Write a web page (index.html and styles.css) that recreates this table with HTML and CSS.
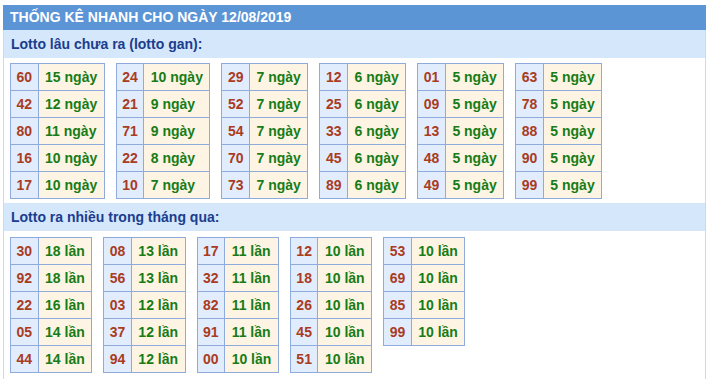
FILE: index.html
```html
<!DOCTYPE html>
<html>
<head>
<meta charset="utf-8">
<link rel="stylesheet" href="styles.css">
</head>
<body>
<div class="box">
  <div class="title">THỐNG KÊ NHANH CHO NGÀY 12/08/2019</div>
  <div class="sub">Lotto lâu chưa ra (lotto gan):</div>
  <div class="group first">
    <table><tr><td class="n">60</td><td class="v">15 ngày</td></tr><tr><td class="n">42</td><td class="v">12 ngày</td></tr><tr><td class="n">80</td><td class="v">11 ngày</td></tr><tr><td class="n">16</td><td class="v">10 ngày</td></tr><tr><td class="n">17</td><td class="v">10 ngày</td></tr></table>
    <table><tr><td class="n">24</td><td class="v">10 ngày</td></tr><tr><td class="n">21</td><td class="v">9 ngày</td></tr><tr><td class="n">71</td><td class="v">9 ngày</td></tr><tr><td class="n">22</td><td class="v">8 ngày</td></tr><tr><td class="n">10</td><td class="v">7 ngày</td></tr></table>
    <table><tr><td class="n">29</td><td class="v">7 ngày</td></tr><tr><td class="n">52</td><td class="v">7 ngày</td></tr><tr><td class="n">54</td><td class="v">7 ngày</td></tr><tr><td class="n">70</td><td class="v">7 ngày</td></tr><tr><td class="n">73</td><td class="v">7 ngày</td></tr></table>
    <table><tr><td class="n">12</td><td class="v">6 ngày</td></tr><tr><td class="n">25</td><td class="v">6 ngày</td></tr><tr><td class="n">33</td><td class="v">6 ngày</td></tr><tr><td class="n">45</td><td class="v">6 ngày</td></tr><tr><td class="n">89</td><td class="v">6 ngày</td></tr></table>
    <table><tr><td class="n">01</td><td class="v">5 ngày</td></tr><tr><td class="n">09</td><td class="v">5 ngày</td></tr><tr><td class="n">13</td><td class="v">5 ngày</td></tr><tr><td class="n">48</td><td class="v">5 ngày</td></tr><tr><td class="n">49</td><td class="v">5 ngày</td></tr></table>
    <table><tr><td class="n">63</td><td class="v">5 ngày</td></tr><tr><td class="n">78</td><td class="v">5 ngày</td></tr><tr><td class="n">88</td><td class="v">5 ngày</td></tr><tr><td class="n">90</td><td class="v">5 ngày</td></tr><tr><td class="n">99</td><td class="v">5 ngày</td></tr></table>
  </div>
  <div class="sub">Lotto ra nhiều trong tháng qua:</div>
  <div class="group second">
    <table><tr><td class="n">30</td><td class="v">18 lần</td></tr><tr><td class="n">92</td><td class="v">18 lần</td></tr><tr><td class="n">22</td><td class="v">16 lần</td></tr><tr><td class="n">05</td><td class="v">14 lần</td></tr><tr><td class="n">44</td><td class="v">14 lần</td></tr></table>
    <table><tr><td class="n">08</td><td class="v">13 lần</td></tr><tr><td class="n">56</td><td class="v">13 lần</td></tr><tr><td class="n">03</td><td class="v">12 lần</td></tr><tr><td class="n">37</td><td class="v">12 lần</td></tr><tr><td class="n">94</td><td class="v">12 lần</td></tr></table>
    <table><tr><td class="n">17</td><td class="v">11 lần</td></tr><tr><td class="n">32</td><td class="v">11 lần</td></tr><tr><td class="n">82</td><td class="v">11 lần</td></tr><tr><td class="n">91</td><td class="v">11 lần</td></tr><tr><td class="n">00</td><td class="v">10 lần</td></tr></table>
    <table><tr><td class="n">12</td><td class="v">10 lần</td></tr><tr><td class="n">18</td><td class="v">10 lần</td></tr><tr><td class="n">26</td><td class="v">10 lần</td></tr><tr><td class="n">45</td><td class="v">10 lần</td></tr><tr><td class="n">51</td><td class="v">10 lần</td></tr></table>
    <table><tr><td class="n">53</td><td class="v">10 lần</td></tr><tr><td class="n">69</td><td class="v">10 lần</td></tr><tr><td class="n">85</td><td class="v">10 lần</td></tr><tr><td class="n">99</td><td class="v">10 lần</td></tr></table>
  </div>
</div>
</body>
</html>
```
FILE: styles.css
```css
html, body {
  margin: 0;
  padding: 0;
  background: #ffffff;
}
body {
  font-family: "Liberation Sans", Arial, sans-serif;
  font-weight: bold;
  font-size: 14px;
}
.box {
  margin: 5px 0 0 3px;
  width: 701px;
  height: 374px;
  border-left: 1px solid #d3d8df;
  border-right: 1px solid #d3d8df;
  box-sizing: content-box;
}
.title {
  height: 25px;
  line-height: 25px;
  background: #5b95d6;
  color: #ffffff;
  margin-left: -1px;
  margin-right: -1px;
  padding-left: 7px;
}
.sub {
  height: 28px;
  line-height: 28px;
  background: #d5e7fb;
  color: #1b3d8f;
  padding-left: 7px;
}
.group {
  display: flex;
  align-items: flex-start;
  gap: 11px;
  padding-left: 6px;
}
.group.first {
  padding-top: 5px;
  padding-bottom: 4px;
}
.group.second {
  padding-top: 6px;
}
table {
  border-collapse: collapse;
}
td {
  border: 1px solid #8fabdc;
  height: 26px;
  line-height: 26px;
  padding: 0;
  white-space: nowrap;
}
td.n {
  background: #e1ecfd;
  color: #a93c1f;
  padding: 0 5.5px;
  text-align: center;
}
td.v {
  background: #fef4e3;
  color: #177c17;
  padding: 0 6.5px;
}
```
